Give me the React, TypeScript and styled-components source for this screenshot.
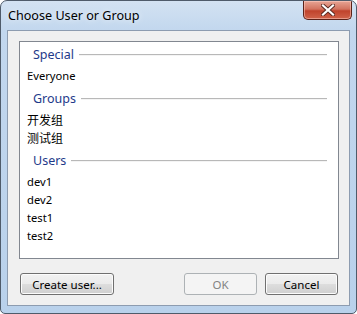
import React from 'react';
import styled, { createGlobalStyle } from 'styled-components';

const GlobalStyle = createGlobalStyle`
  html, body {
    margin: 0;
    padding: 0;
    background: #ffffff;
  }
  body {
    font-family: 'Noto Sans', 'Liberation Sans', sans-serif;
  }
`;

const Frame = styled.div`
  width: 357px;
  height: 314px;
  box-sizing: border-box;
  border: 1px solid #4f5b6a;
  border-radius: 7px 7px 5px 5px;
  background: linear-gradient(to bottom, #d3e2f2 0px, #c2d7ee 30px, #b9d1eb 100%);
  display: flex;
  flex-direction: column;
  padding: 0 6px 7px 6px;
  overflow: hidden;
`;

const TitleBar = styled.div`
  height: 29px;
  display: flex;
  align-items: flex-start;
  justify-content: space-between;
`;

const Title = styled.div`
  margin-top: 6px;
  margin-left: 1px;
  font-size: 12.6px;
  color: #000;
  text-shadow: 0 0 6px rgba(255, 255, 255, 0.9);
`;

const CloseButton = styled.div`
  width: 49px;
  height: 19px;
  margin-right: -2px;
  box-sizing: border-box;
  border: 1px solid #5b2219;
  border-top: none;
  border-radius: 0 0 5px 5px;
  background: linear-gradient(to bottom, #e7a595 0%, #d2735f 45%, #c0432c 55%, #d0634a 100%);
  box-shadow: inset 0 0 0 1px rgba(255, 210, 200, 0.5);
  display: flex;
  align-items: center;
  justify-content: center;
`;

const Client = styled.div`
  flex: 1;
  border: 1px solid #8d9cb0;
  background: #f0f0f0;
  display: flex;
  flex-direction: column;
  padding: 10px 10px 9px 11px;
`;

const ListBox = styled.div`
  height: 218px;
  box-sizing: border-box;
  border: 1px solid #828790;
  background: #ffffff;
  padding: 3px 11px 0 0;
  display: flex;
  flex-direction: column;
  gap: 4px;
`;

const Section = styled.div`
  display: flex;
  flex-direction: column;
`;

const Header = styled.div`
  height: 18px;
  margin-bottom: 4px;
  display: flex;
  align-items: center;
  padding-left: 13px;
  gap: 5px;
  font-size: 12.5px;
  color: #1e3a8a;
`;

const HeaderLine = styled.div`
  flex: 1;
  height: 1px;
  background: #b8b8b8;
  box-shadow: 0 1px 0 #f4f4f4;
  margin-top: 1px;
`;

const Item = styled.div<{ cjk?: boolean }>`
  height: 18px;
  line-height: 18px;
  padding-left: 7px;
  font-size: ${p => (p.cjk ? '12px' : '11.2px')};
  font-family: ${p =>
    p.cjk
      ? "'Noto Sans CJK SC', 'Noto Sans', sans-serif"
      : "'Noto Sans', 'Liberation Sans', sans-serif"};
  color: #000;
  white-space: nowrap;
`;

const ButtonRow = styled.div`
  margin-top: 14px;
  padding: 0 1px 0 1px;
  display: flex;
  align-items: center;
  gap: 8px;
`;

const Spacer = styled.div`
  flex: 1;
`;

const Button = styled.button<{ width: number; disabled?: boolean }>`
  width: ${p => p.width}px;
  height: 22px;
  box-sizing: border-box;
  border-radius: 3px;
  font-family: 'Noto Sans', 'Liberation Sans', sans-serif;
  font-size: 11.5px;
  padding: 0;
  border: 1px solid ${p => (p.disabled ? '#adb2b5' : '#707070')};
  color: ${p => (p.disabled ? '#838383' : '#000')};
  background: ${p =>
    p.disabled
      ? '#f4f4f4'
      : 'linear-gradient(to bottom, #f2f2f2 0%, #ebebeb 48%, #dddddd 52%, #cfcfcf 100%)'};
  box-shadow: ${p => (p.disabled ? 'none' : 'inset 0 0 0 1px #fcfcfc')};
`;

const groups: { title: string; cjk?: boolean; items: string[] }[] = [
  { title: 'Special', items: ['Everyone'] },
  { title: 'Groups', cjk: true, items: ['开发组', '测试组'] },
  { title: 'Users', items: ['dev1', 'dev2', 'test1', 'test2'] },
];

const CloseGlyph = () => (
  <svg width="14" height="12" viewBox="0 0 14 12">
    <path
      d="M2 1.5 L12 10.5 M12 1.5 L2 10.5"
      stroke="#5a2a22"
      strokeWidth="4"
      strokeLinecap="square"
    />
    <path
      d="M2 1.5 L12 10.5 M12 1.5 L2 10.5"
      stroke="#ffffff"
      strokeWidth="2.2"
      strokeLinecap="square"
    />
  </svg>
);

export default function App() {
  return (
    <>
      <GlobalStyle />
      <Frame>
        <TitleBar>
          <Title>Choose User or Group</Title>
          <CloseButton>
            <CloseGlyph />
          </CloseButton>
        </TitleBar>
        <Client>
          <ListBox>
            {groups.map(g => (
              <Section key={g.title}>
                <Header>
                  <span>{g.title}</span>
                  <HeaderLine />
                </Header>
                {g.items.map(name => (
                  <Item key={name} cjk={g.cjk}>
                    {name}
                  </Item>
                ))}
              </Section>
            ))}
          </ListBox>
          <ButtonRow>
            <Button width={94}>Create user...</Button>
            <Spacer />
            <Button width={73} disabled>
              OK
            </Button>
            <Button width={73}>Cancel</Button>
          </ButtonRow>
        </Client>
      </Frame>
    </>
  );
}
